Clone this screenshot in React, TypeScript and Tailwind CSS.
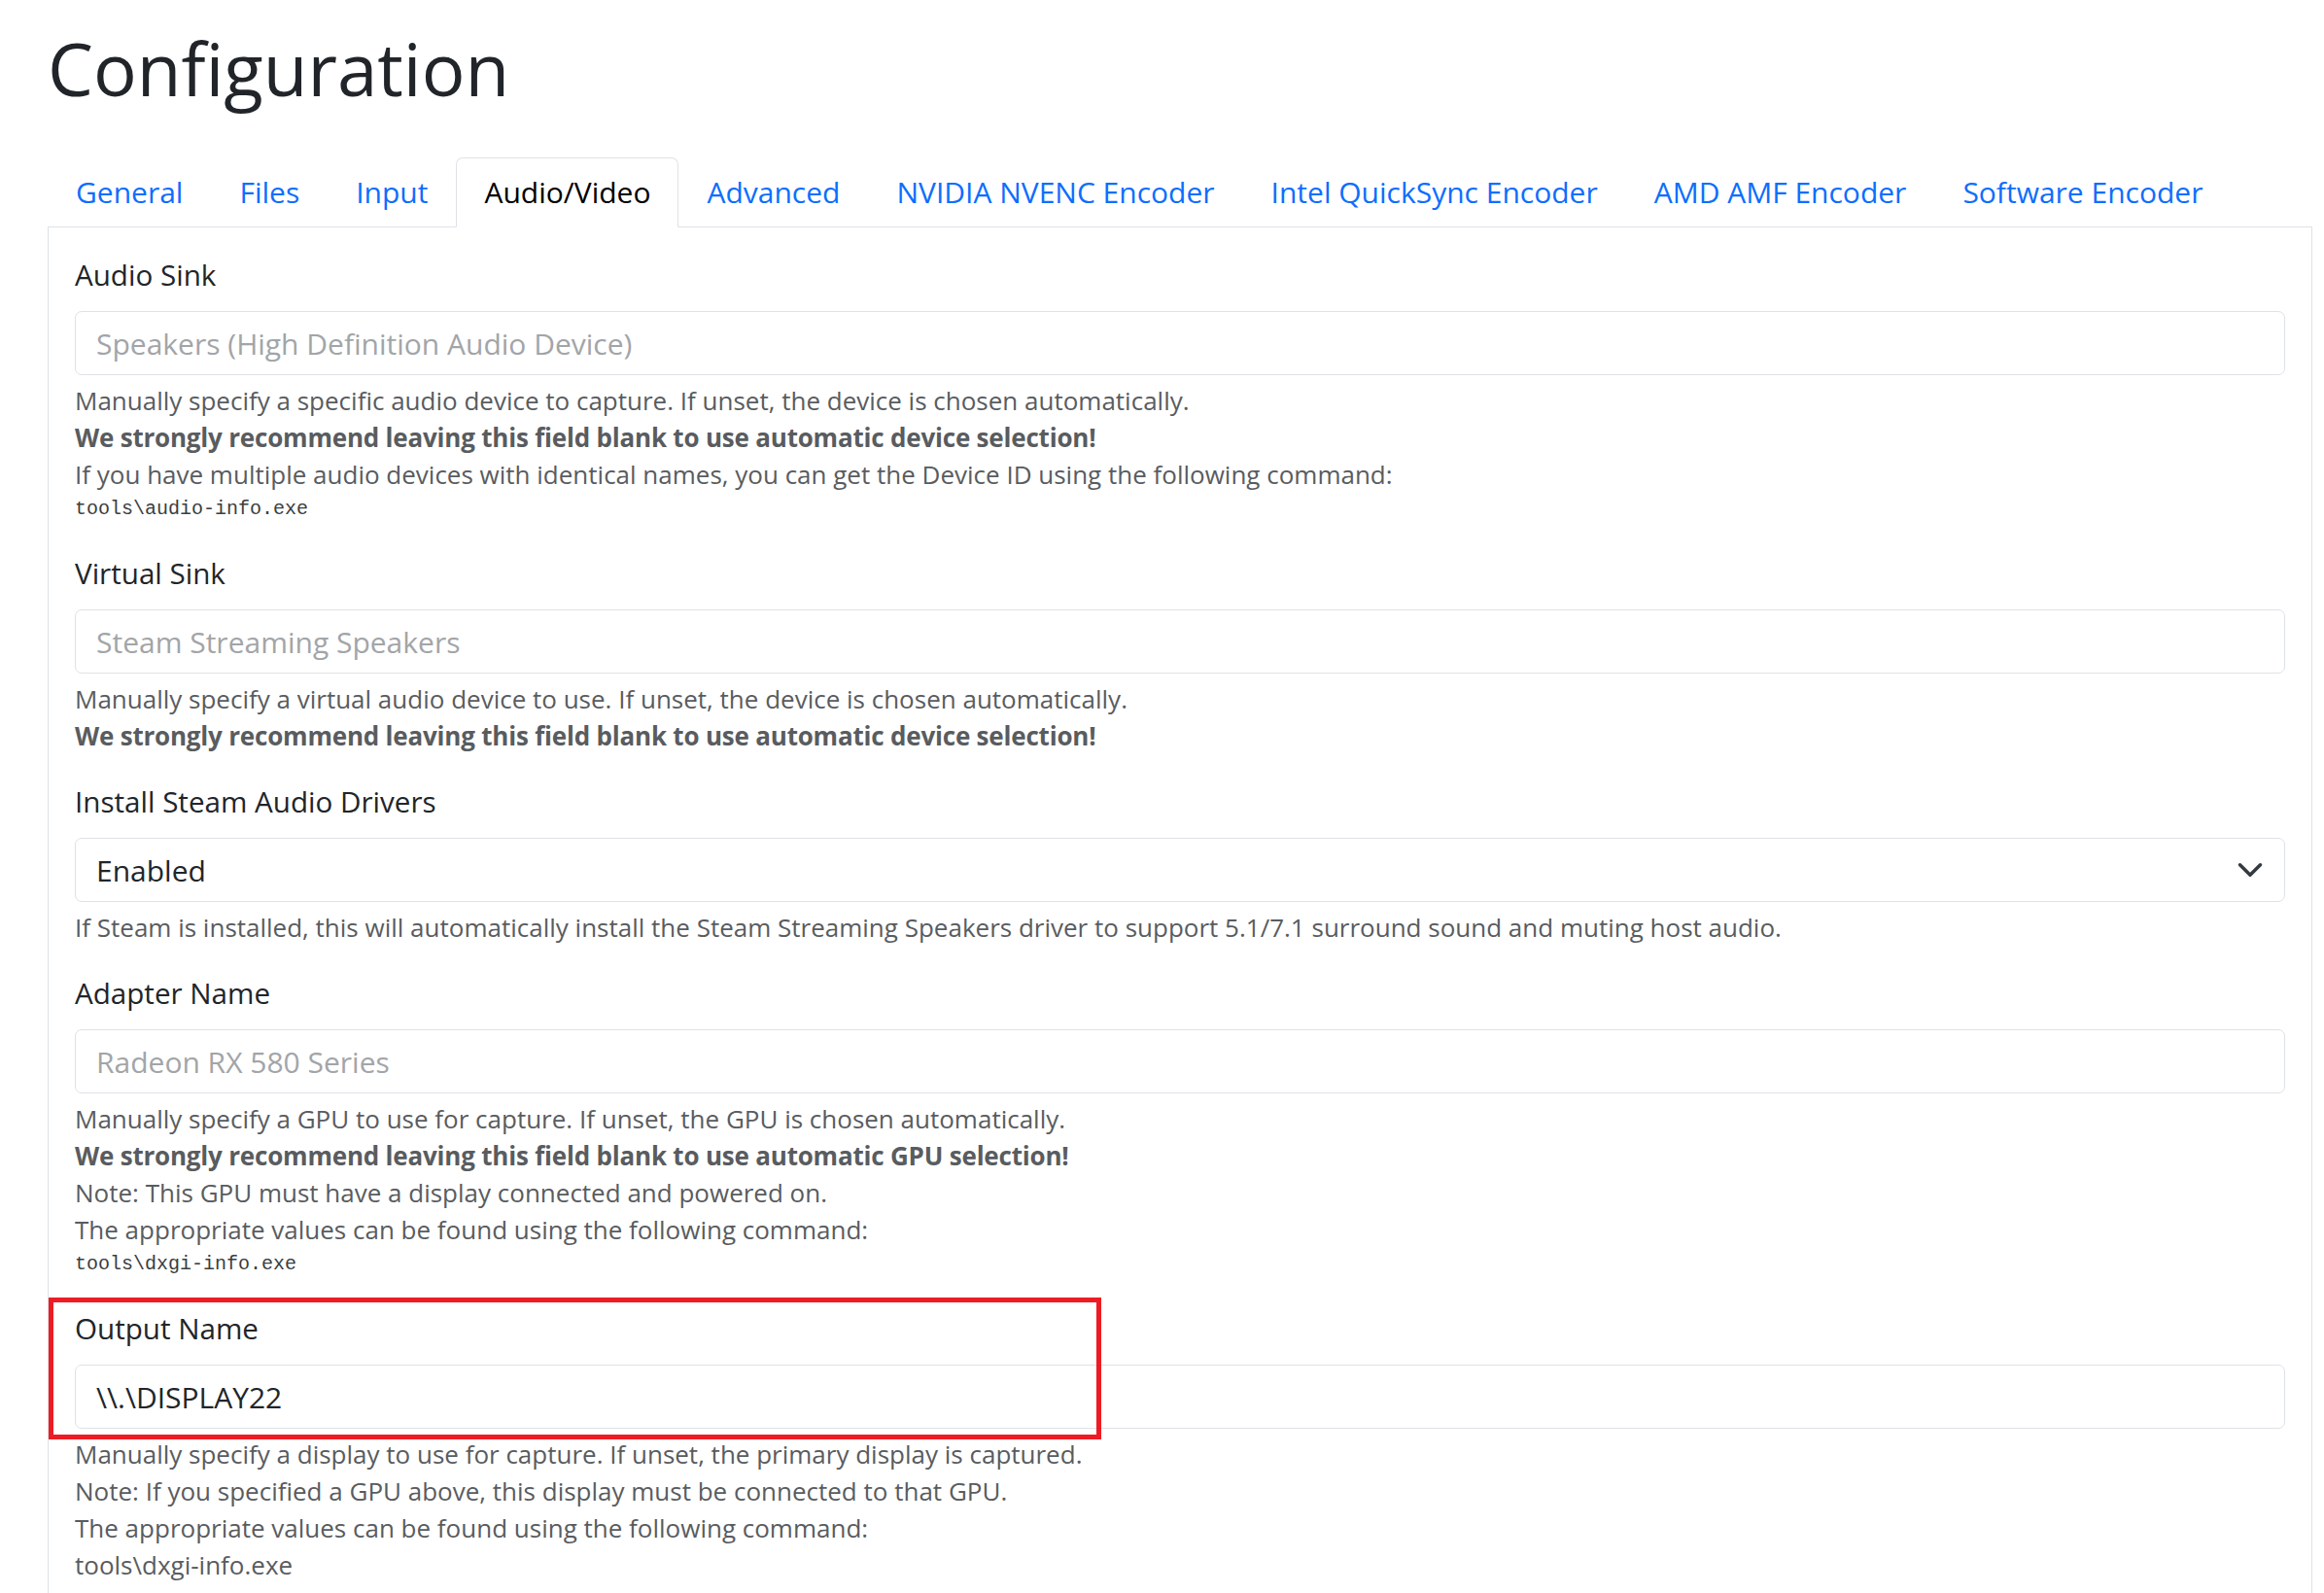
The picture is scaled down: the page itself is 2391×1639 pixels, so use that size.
import { ReactNode } from "react";

const tabs = [
  "General",
  "Files",
  "Input",
  "Audio/Video",
  "Advanced",
  "NVIDIA NVENC Encoder",
  "Intel QuickSync Encoder",
  "AMD AMF Encoder",
  "Software Encoder",
];

const font = "font-['Segoe_UI','Open_Sans','Noto_Sans',sans-serif]";

function Label({ children }: { children: ReactNode }) {
  return <div className="text-[29.6px] leading-[42px] text-[#212529] mb-[16px]">{children}</div>;
}

function TextInput({ placeholder, value }: { placeholder?: string; value?: string }) {
  return (
    <input
      className="block w-full h-[66px] px-[21px] border border-[#dee2e6] rounded-[7px] bg-white text-[30px] text-[#212529] placeholder:text-[#a2a5a8] outline-none"
      placeholder={placeholder}
      defaultValue={value}
    />
  );
}

function Help({ children }: { children: ReactNode }) {
  return <div className="mt-[7px] text-[26px] leading-[38px] text-[#595c5f]">{children}</div>;
}

function Strong({ children }: { children: ReactNode }) {
  return <div className="font-bold tracking-[-0.2px]">{children}</div>;
}

function Code({ children }: { children: ReactNode }) {
  return (
    <div className="font-['Liberation_Mono',monospace] text-[20px] leading-[34px] text-[#3b3e41]">
      {children}
    </div>
  );
}

export default function App() {
  return (
    <div className={`${font} bg-white min-h-screen pt-[24px] pl-[49px]`}>
      <h1 className="text-[74.5px] leading-[92px] font-normal text-[#212529] mb-[46px]">Configuration</h1>

      <nav className="flex w-[2330px] border-b border-[#dee2e6]">
        {tabs.map((t) => {
          const active = t === "Audio/Video";
          return (
            <div
              key={t}
              className={
                active
                  ? "px-[28px] py-[14px] text-[30px] leading-[42px] -mb-px border border-[#dee2e6] border-b-white rounded-t-[7px] bg-white text-black"
                  : "px-[28px] py-[14px] text-[30px] leading-[42px] -mb-px border border-transparent text-[#0d6efd]"
              }
            >
              {t}
            </div>
          );
        })}
      </nav>

      <div className="w-[2330px] border-x border-b border-[#dee2e6] px-[27px] pt-[28px] pb-[28px]">
        <div className="mb-[28px]">
          <Label>Audio Sink</Label>
          <TextInput placeholder="Speakers (High Definition Audio Device)" />
          <Help>
            <div>Manually specify a specific audio device to capture. If unset, the device is chosen automatically.</div>
            <Strong>We strongly recommend leaving this field blank to use automatic device selection!</Strong>
            <div>If you have multiple audio devices with identical names, you can get the Device ID using the following command:</div>
            <Code>tools\audio-info.exe</Code>
          </Help>
        </div>

        <div className="mb-[28px]">
          <Label>Virtual Sink</Label>
          <TextInput placeholder="Steam Streaming Speakers" />
          <Help>
            <div>Manually specify a virtual audio device to use. If unset, the device is chosen automatically.</div>
            <Strong>We strongly recommend leaving this field blank to use automatic device selection!</Strong>
          </Help>
        </div>

        <div className="mb-[28px]">
          <Label>Install Steam Audio Drivers</Label>
          <div className="relative h-[66px] border border-[#dee2e6] rounded-[7px] flex items-center px-[21px] text-[30px] text-[#212529]">
            Enabled
            <svg
              className="absolute right-[21px] top-1/2 -translate-y-1/2 w-[28px] h-[28px]"
              viewBox="0 0 16 16"
              fill="none"
              stroke="#343a40"
              strokeWidth="2"
              strokeLinecap="round"
              strokeLinejoin="round"
            >
              <path d="m2 5 6 6 6-6" />
            </svg>
          </div>
          <Help>
            If Steam is installed, this will automatically install the Steam Streaming Speakers driver to support 5.1/7.1 surround sound and muting host audio.
          </Help>
        </div>

        <div className="mb-[28px]">
          <Label>Adapter Name</Label>
          <TextInput placeholder="Radeon RX 580 Series" />
          <Help>
            <div>Manually specify a GPU to use for capture. If unset, the GPU is chosen automatically.</div>
            <Strong>We strongly recommend leaving this field blank to use automatic GPU selection!</Strong>
            <div>Note: This GPU must have a display connected and powered on.</div>
            <div>The appropriate values can be found using the following command:</div>
            <Code>tools\dxgi-info.exe</Code>
          </Help>
        </div>

        <div className="relative">
          <Label>Output Name</Label>
          <TextInput value={"\\\\.\\DISPLAY22"} />
          <Help>
            <div>Manually specify a display to use for capture. If unset, the primary display is captured.</div>
            <div>Note: If you specified a GPU above, this display must be connected to that GPU.</div>
            <div>The appropriate values can be found using the following command:</div>
            <div>tools\dxgi-info.exe</div>
          </Help>
          <div className="absolute left-[-27px] top-[-11px] w-[1083px] h-[146px] border-[5px] border-[#ed1c24] pointer-events-none" />
        </div>
      </div>
    </div>
  );
}
